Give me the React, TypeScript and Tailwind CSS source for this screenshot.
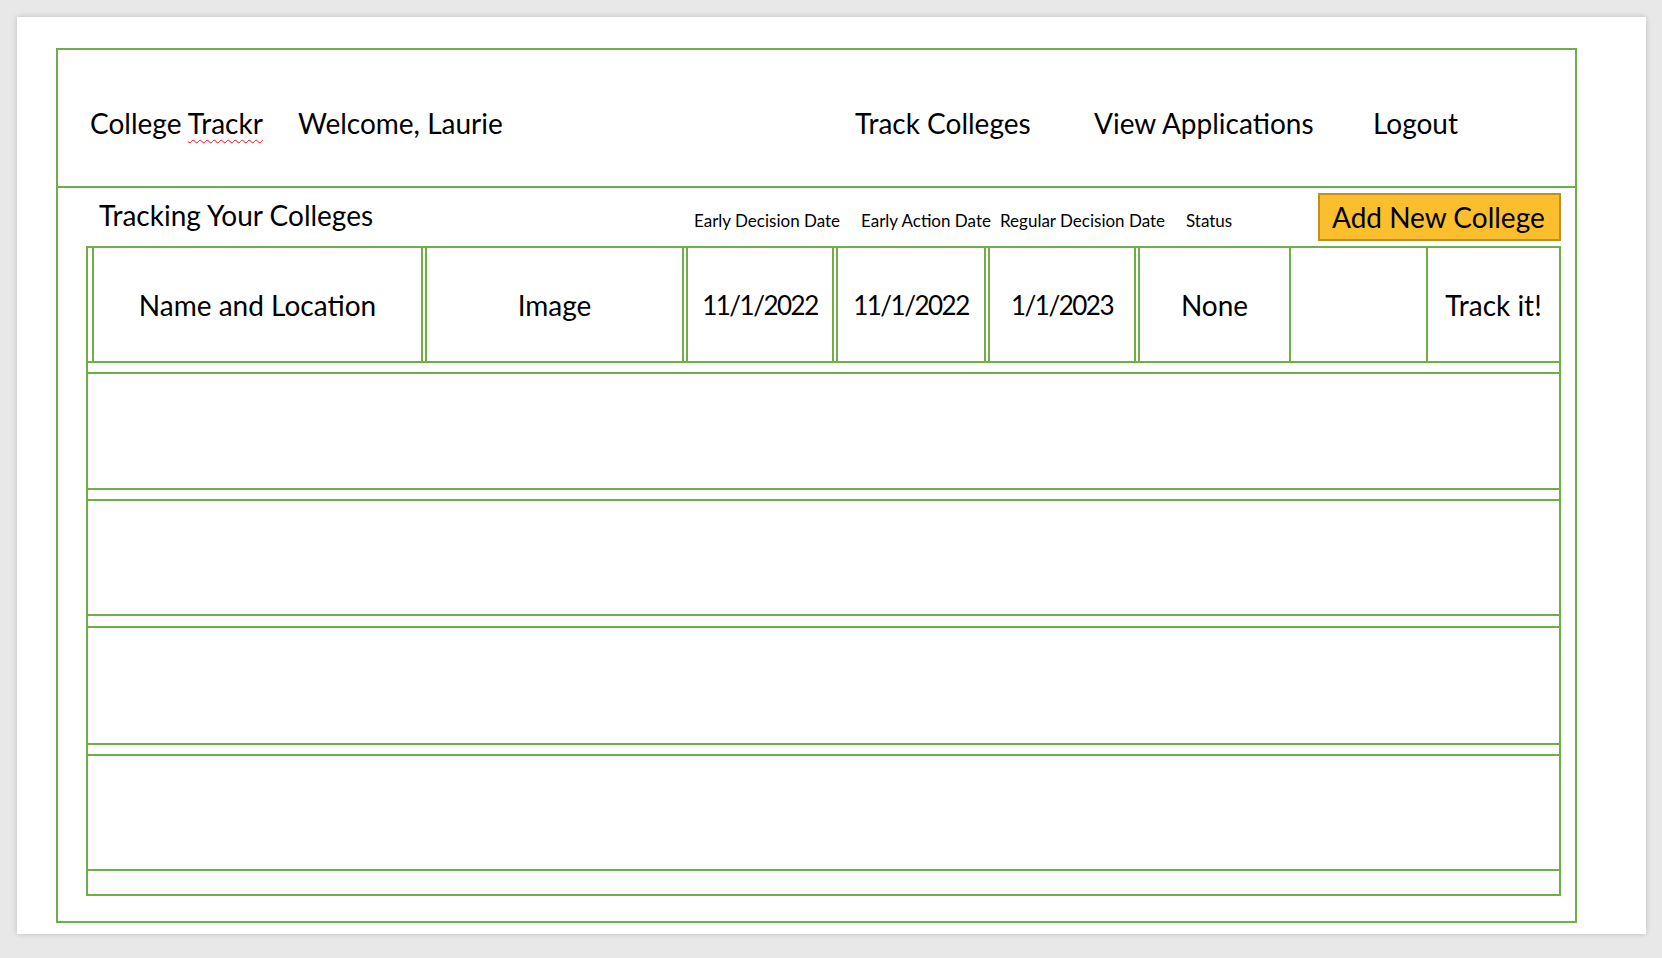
export default function App() {
  return (
    <div className="min-h-screen w-full bg-[#e8e8e8] pl-[17px] pt-[17px] font-['Lato',sans-serif] text-black">
      <div className="h-[917px] w-[1629px] bg-white pl-[39px] pt-[31px] shadow-[0_0_6px_rgba(0,0,0,0.18)]">
        <div className="flex h-[875px] w-[1521px] flex-col border-2 border-[#70ad47]">
          <header className="flex h-[138px] shrink-0 border-b-2 border-[#70ad47] pl-[32px] pt-[59px] text-[28px] leading-none">
            <span className="w-[208px]">
              College{' '}
              <span className="underline decoration-[#e81123] decoration-wavy decoration-1 underline-offset-[5px]">
                Trackr
              </span>
            </span>
            <span className="w-[557px]">Welcome, Laurie</span>
            <span className="w-[239px]">Track Colleges</span>
            <span className="w-[279px]">View Applications</span>
            <span>Logout</span>
          </header>

          <div className="ml-[28px] flex h-[58px] w-[1475px] shrink-0 pl-[13px]">
            <div className="w-[595px] pt-[13px] text-[28px] leading-none">Tracking Your Colleges</div>
            <div className="w-[167px] pt-[24px] text-[17px] leading-none">Early Decision Date</div>
            <div className="w-[139px] pt-[24px] text-[17px] leading-none">Early Action Date</div>
            <div className="w-[186px] pt-[24px] text-[17px] leading-none">Regular Decision Date</div>
            <div className="w-[132px] pt-[24px] text-[17px] leading-none">Status</div>
            <button className="mt-[5px] flex h-[48px] w-[243px] items-center border-2 border-[#bf8f22] bg-[#fbbf2d] pl-[12px] text-[28px] leading-none">
              Add New College
            </button>
          </div>

          <div className="ml-[28px] flex h-[650px] w-[1475px] shrink-0 flex-col border-2 border-[#70ad47] text-[28px] leading-none">
            <div className="flex h-[115px] shrink-0 border-b-2 border-[#70ad47]">
              <div className="w-[4px]" />
              <div className="flex w-[331px] items-center justify-center border-x-2 border-[#70ad47]">Name and Location</div>
              <div className="w-[2px]" />
              <div className="flex w-[259px] items-center justify-center border-x-2 border-[#70ad47]">Image</div>
              <div className="w-[2px]" />
              <div className="flex w-[148px] items-center justify-center border-x-2 border-[#70ad47] text-[26px] tracking-[-1.5px]">11/1/2022</div>
              <div className="w-[2px]" />
              <div className="flex w-[150px] items-center justify-center border-x-2 border-[#70ad47] text-[26px] tracking-[-1.5px]">11/1/2022</div>
              <div className="w-[2px]" />
              <div className="flex w-[148px] items-center justify-center border-x-2 border-[#70ad47] text-[26px] tracking-[-1.5px]">1/1/2023</div>
              <div className="w-[2px]" />
              <div className="flex w-[153px] items-center justify-center border-x-2 border-[#70ad47]">None</div>
              <div className="w-[137px] border-r-2 border-[#70ad47]" />
              <div className="flex flex-1 items-center justify-center">Track it!</div>
            </div>
            <div className="mt-[9px] h-[118px] shrink-0 border-y-2 border-[#70ad47]" />
            <div className="mt-[9px] h-[117px] shrink-0 border-y-2 border-[#70ad47]" />
            <div className="mt-[10px] h-[119px] shrink-0 border-y-2 border-[#70ad47]" />
            <div className="mt-[9px] h-[117px] shrink-0 border-y-2 border-[#70ad47]" />
          </div>
        </div>
      </div>
    </div>
  )
}
